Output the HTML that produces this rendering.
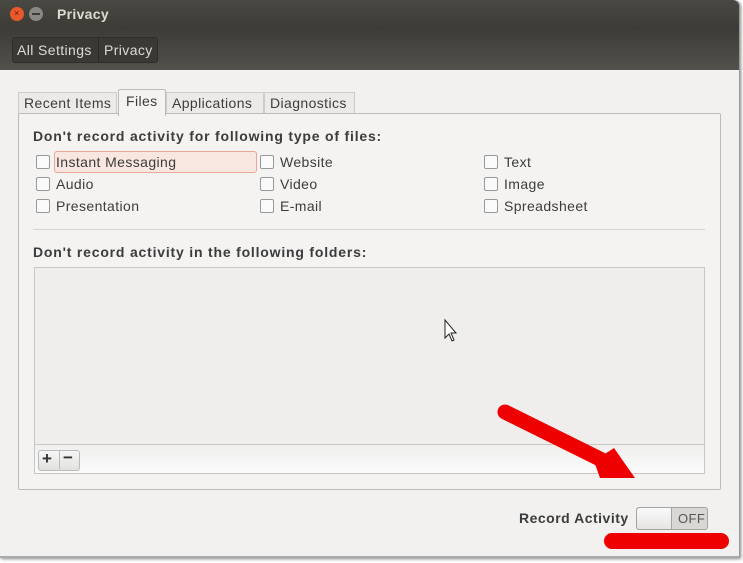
<!DOCTYPE html>
<html><head><style>
body{margin:0;width:743px;height:563px;background:#fff;font-family:"Liberation Sans",sans-serif;font-size:14px;color:#3c3c3c;position:relative;overflow:hidden;letter-spacing:0.4px}
.win{position:absolute;left:0;top:0;width:739px;height:556px;background:#f2f1f0;border-right:1px solid #999;border-bottom:2px solid #aaa;border-top-right-radius:6px;box-shadow:1px 1px 3px #888}
.hdr{position:absolute;left:0;top:0;width:739px;height:70px;background:linear-gradient(#4a4843,#3d3b36 40%,#53514b);border-top-right-radius:6px}
.a{position:absolute;white-space:nowrap}
.b{font-weight:bold;letter-spacing:0.8px}
.cb{position:absolute;width:12px;height:12px;border:1px solid #999;border-radius:2px;background:#fafafa}
</style></head><body>
<div class="win"></div>
<div class="hdr">
 <div class="a" style="left:10px;top:7px;width:14px;height:14px;border-radius:50%;background:#e8582a"></div>
 <div class="a" style="left:14px;top:8px;font-size:9px;color:#5a1a0a">×</div>
 <div class="a" style="left:29px;top:7px;width:14px;height:14px;border-radius:50%;background:#8a8883"></div>
 <div class="a" style="left:32px;top:13px;width:8px;height:2px;background:#3c3b37"></div>
 <div class="a b" style="left:57px;top:6px;color:#dfdbd2;font-size:14px;letter-spacing:0.3px">Privacy</div>
 <div class="a" style="left:12px;top:37px;width:144px;height:24px;border:1px solid #2e2d2a;border-radius:3px;background:#3a3935"></div>
 <div class="a" style="left:98px;top:38px;width:1px;height:24px;background:#2a2926"></div>
 <div class="a" style="left:17px;top:42px;color:#dfdbd2">All Settings</div>
 <div class="a" style="left:104px;top:42px;color:#dfdbd2">Privacy</div>
</div>
<div class="a" style="left:18px;top:92px;width:97px;height:21px;border:1px solid #ccc;border-bottom:none;background:#eceae8"></div>
<div class="a" style="left:24px;top:95px">Recent Items</div>
<div class="a" style="left:166px;top:92px;width:96px;height:21px;border:1px solid #ccc;border-bottom:none;background:#eceae8"></div>
<div class="a" style="left:172px;top:95px">Applications</div>
<div class="a" style="left:264px;top:92px;width:89px;height:21px;border:1px solid #ccc;border-bottom:none;background:#eceae8"></div>
<div class="a" style="left:270px;top:95px">Diagnostics</div>
<div class="a" style="left:18px;top:113px;width:701px;height:375px;border:1px solid #bbb;border-radius:2px;background:#f4f3f2"></div>
<div class="a" style="left:118px;top:89px;width:46px;height:26px;border:1px solid #bbb;border-bottom:none;background:#f4f3f2;border-radius:2px 2px 0 0"></div>
<div class="a" style="left:126px;top:93px">Files</div>
<div class="a b" style="left:33px;top:128px">Don't record activity for following type of files:</div>
<div class="a" style="left:54px;top:151px;width:201px;height:20px;border:1px solid #e8a898;border-radius:3px;background:#f8e6e0"></div>
<div class="cb" style="left:36px;top:155px"></div><div class="a" style="left:56px;top:154px">Instant Messaging</div>
<div class="cb" style="left:36px;top:177px"></div><div class="a" style="left:56px;top:176px">Audio</div>
<div class="cb" style="left:36px;top:199px"></div><div class="a" style="left:56px;top:198px">Presentation</div>
<div class="cb" style="left:260px;top:155px"></div><div class="a" style="left:280px;top:154px">Website</div>
<div class="cb" style="left:260px;top:177px"></div><div class="a" style="left:280px;top:176px">Video</div>
<div class="cb" style="left:260px;top:199px"></div><div class="a" style="left:280px;top:198px">E-mail</div>
<div class="cb" style="left:484px;top:155px"></div><div class="a" style="left:504px;top:154px">Text</div>
<div class="cb" style="left:484px;top:177px"></div><div class="a" style="left:504px;top:176px">Image</div>
<div class="cb" style="left:484px;top:199px"></div><div class="a" style="left:504px;top:198px">Spreadsheet</div>
<div class="a" style="left:33px;top:229px;width:672px;height:1px;background:#d6d4d1"></div>
<div class="a b" style="left:33px;top:244px">Don't record activity in the following folders:</div>
<div class="a" style="left:34px;top:267px;width:669px;height:176px;border:1px solid #c8c6c3;background:#efeeec"></div>
<div class="a" style="left:34px;top:445px;width:669px;height:28px;border:1px solid #c8c6c3;border-top:none;background:linear-gradient(#f0efee,#fbfbfb)"></div>
<div class="a" style="left:38px;top:450px;width:40px;height:19px;border:1px solid #bbb;border-radius:3px;background:linear-gradient(#f6f6f6,#e2e1df)"></div>
<div class="a" style="left:59px;top:451px;width:1px;height:18px;background:#bbb"></div>
<div class="a" style="left:42px;top:449px;font-weight:bold;font-size:17px;color:#333">+</div>
<div class="a" style="left:63px;top:448px;font-weight:bold;font-size:17px;color:#333">−</div>
<svg class="a" style="left:440px;top:318px" width="20" height="26"><path d="M5 2 L5 20 L9 16 L12 23 L14 22 L11 15 L16 15 Z" fill="#fff" stroke="#222" stroke-width="1"/></svg>
<div class="a b" style="left:519px;top:510px;letter-spacing:0.5px">Record Activity</div>
<div class="a" style="left:636px;top:507px;width:70px;height:21px;border:1px solid #a5a3a0;border-radius:3px;background:#d9d7d4"></div>
<div class="a" style="left:637px;top:508px;width:34px;height:21px;border-right:1px solid #a5a3a0;border-radius:3px 0 0 3px;background:linear-gradient(#fafafa,#e6e5e3)"></div>
<div class="a" style="left:678px;top:511px;font-size:13px;color:#555">OFF</div>
<div class="a" style="left:604px;top:533px;width:125px;height:16px;border-radius:8px;background:#ee0000"></div>
<svg class="a" style="left:480px;top:395px" width="170" height="90"><path d="M25 17 L128 68" stroke="#ee0000" stroke-width="15" stroke-linecap="round"/><path d="M114 66 L134 53 L155 83 L120 83 Z" fill="#ee0000"/></svg>
</body></html>
